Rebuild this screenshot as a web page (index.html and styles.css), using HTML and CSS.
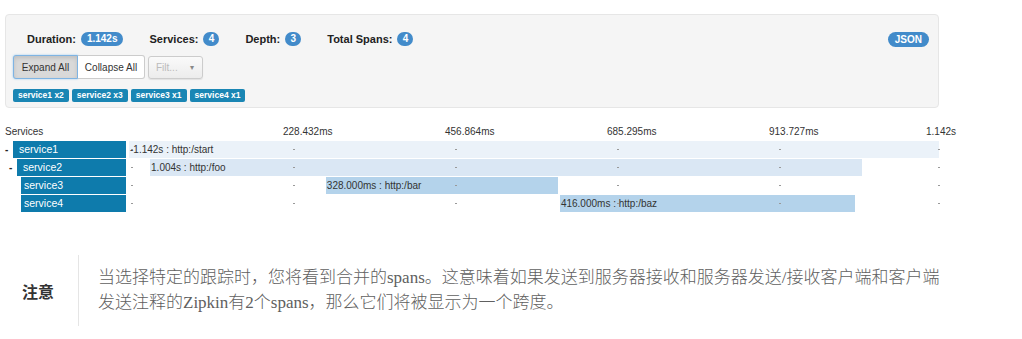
FILE: index.html
```html
<!DOCTYPE html>
<html lang="zh">
<head>
    <meta charset="UTF-8">
    <meta name="viewport" content="width=device-width, initial-scale=1.0">
    <title>Zipkin Trace</title>
    <link rel="stylesheet" href="styles.css">
</head>
<body>

    <!-- Trace summary panel -->
    <div class="trace-panel">
        <div class="summary">
            <span class="stat">Duration: <span class="badge">1.142s</span></span>
            <span class="stat">Services: <span class="badge round">4</span></span>
            <span class="stat">Depth: <span class="badge round">3</span></span>
            <span class="stat">Total Spans: <span class="badge round">4</span></span>
            <span class="badge json">JSON</span>
        </div>

        <div class="controls">
            <div class="btn-group">
                <button class="btn active">Expand All</button>
                <button class="btn">Collapse All</button>
            </div>
            <div class="filter-select">
                <span class="placeholder">Filt...</span>
                <span class="caret">&#9662;</span>
            </div>
        </div>

        <div class="service-tags">
            <span class="tag">service1 x2</span>
            <span class="tag">service2 x3</span>
            <span class="tag">service3 x1</span>
            <span class="tag">service4 x1</span>
        </div>
    </div>

    <!-- Timeline -->
    <div class="timeline">
        <div class="timeline-header">
            <div class="name-col">Services</div>
            <div class="axis">
                <span class="tick-label" style="left: 20%;">228.432ms</span>
                <span class="tick-label" style="left: 40%;">456.864ms</span>
                <span class="tick-label" style="left: 60%;">685.295ms</span>
                <span class="tick-label" style="left: 80%;">913.727ms</span>
                <span class="tick-label last" style="left: 100%;">1.142s</span>
            </div>
        </div>

        <div class="span-row">
            <div class="name-col depth-0"><span class="toggle">-</span><span class="service-name">service1</span></div>
            <div class="axis">
                <div class="span-bar level-1" style="left: 0%; width: 100%;">-1.142s : http:/start</div>
                <i class="dot" style="left: 0%;"></i><i class="dot" style="left: 20%;"></i><i class="dot" style="left: 40%;"></i><i class="dot" style="left: 60%;"></i><i class="dot" style="left: 80%;"></i><i class="dot" style="left: 99.6%;"></i>
            </div>
        </div>

        <div class="span-row">
            <div class="name-col depth-1"><span class="toggle">-</span><span class="service-name">service2</span></div>
            <div class="axis">
                <div class="span-bar level-2" style="left: 2.6%; width: 87.9%;">1.004s : http:/foo</div>
                <i class="dot" style="left: 0%;"></i><i class="dot" style="left: 20%;"></i><i class="dot" style="left: 40%;"></i><i class="dot" style="left: 60%;"></i><i class="dot" style="left: 80%;"></i><i class="dot" style="left: 99.6%;"></i>
            </div>
        </div>

        <div class="span-row">
            <div class="name-col depth-2"><span class="toggle"></span><span class="service-name">service3</span></div>
            <div class="axis">
                <div class="span-bar level-3" style="left: 24.3%; width: 28.7%;">328.000ms : http:/bar</div>
                <i class="dot" style="left: 0%;"></i><i class="dot" style="left: 20%;"></i><i class="dot" style="left: 40%;"></i><i class="dot" style="left: 60%;"></i><i class="dot" style="left: 80%;"></i><i class="dot" style="left: 99.6%;"></i>
            </div>
        </div>

        <div class="span-row">
            <div class="name-col depth-2"><span class="toggle"></span><span class="service-name">service4</span></div>
            <div class="axis">
                <div class="span-bar level-3" style="left: 53.2%; width: 36.4%;">416.000ms : http:/baz</div>
                <i class="dot" style="left: 0%;"></i><i class="dot" style="left: 20%;"></i><i class="dot" style="left: 40%;"></i><i class="dot" style="left: 60%;"></i><i class="dot" style="left: 80%;"></i><i class="dot" style="left: 99.6%;"></i>
            </div>
        </div>
    </div>

    <!-- Note -->
    <div class="note">
        <div class="note-label">注意</div>
        <div class="note-body">
            当选择特定的跟踪时，您将看到合并的spans。这意味着如果发送到服务器接收和服务器发送/接收客户端和客户端发送注释的Zipkin有2个spans，那么它们将被显示为一个跨度。
        </div>
    </div>

</body>
</html>
```

FILE: styles.css
```css
/* General Page Styling */
body {
    font-family: "Liberation Sans", Arial, sans-serif;
    background-color: #fff;
    color: #333;
    margin: 0;
    padding: 14px 0 0 5px;
}

/* Trace Panel */
.trace-panel {
    width: 932px;
    height: 92px;
    background-color: #f5f5f5;
    border: 1px solid #e6e6e6;
    border-radius: 4px;
}

.summary {
    display: flex;
    align-items: center;
    gap: 26px;
    padding: 16px 9px 0 21px;
    height: 16px;
}

.stat {
    font-size: 11px;
    font-weight: bold;
    color: #222;
    display: flex;
    align-items: center;
    gap: 5px;
}

.badge {
    display: inline-block;
    background-color: #428bca;
    color: white;
    font-size: 10px;
    font-weight: bold;
    line-height: 14px;
    height: 14px;
    padding: 0 6px;
    border-radius: 8px;
}

.badge.round {
    width: 16px;
    padding: 0;
    text-align: center;
}

.badge.json {
    margin-left: auto;
    padding: 0 7px;
    height: 15px;
    line-height: 15px;
}

/* Buttons */
.controls {
    display: flex;
    align-items: center;
    gap: 3px;
    padding: 8px 0 0 7px;
}

.btn-group {
    display: flex;
}

.btn {
    font-family: "Liberation Sans", Arial, sans-serif;
    font-size: 10px;
    color: #333;
    height: 24px;
    padding: 0;
    white-space: nowrap;
    background-color: #fff;
    border: 1px solid #ccc;
    margin: 0;
}

.btn:first-child {
    border-radius: 3px 0 0 3px;
}

.btn:last-child {
    border-radius: 0 3px 3px 0;
    border-left: none;
    width: 67px;
}

.btn.active {
    width: 65px;
    background-color: #d9d9d9;
    border-color: #7fb4e3;
    box-shadow: inset 0 2px 4px rgba(0, 0, 0, 0.12), 0 0 2px rgba(102, 175, 233, 0.7);
}

.filter-select {
    width: 55px;
    height: 23px;
    border: 1px solid #ccc;
    border-radius: 3px;
    background: linear-gradient(#fafafa, #ececec);
    display: flex;
    align-items: center;
    justify-content: space-between;
    padding: 0 8px 0 7px;
    box-sizing: border-box;
    box-shadow: 0 1px 1px rgba(0, 0, 0, 0.08);
}

.placeholder {
    font-size: 10px;
    color: #bbb;
}

.caret {
    font-size: 8px;
    color: #888;
}

/* Service tags */
.service-tags {
    display: flex;
    gap: 3px;
    padding: 10px 0 0 7px;
}

.tag {
    background-color: #1a86b4;
    color: white;
    font-size: 8.5px;
    font-weight: bold;
    line-height: 13px;
    height: 13px;
    padding: 0 5px;
    border-radius: 2px;
}

/* Timeline */
.timeline {
    width: 934px;
    margin-top: 16px;
    font-size: 10px;
}

.timeline-header,
.span-row {
    display: grid;
    grid-template-columns: 121px 810px;
    column-gap: 3px;
}

.timeline-header {
    height: 17px;
    line-height: 16px;
}

.span-row {
    height: 17px;
    margin-bottom: 1px;
}

.axis {
    position: relative;
}

.tick-label {
    position: absolute;
    top: 0;
    margin-left: -8px;
    white-space: nowrap;
}

.tick-label.last {
    margin-left: -13px;
}

.name-col {
    display: flex;
    align-items: stretch;
}

.depth-1 {
    padding-left: 4px;
}

.depth-2 {
    padding-left: 8px;
}

.toggle {
    width: 8px;
    flex: none;
    font-weight: bold;
    line-height: 17px;
    color: #222;
}

.service-name {
    flex: 1;
    background-color: #0e7bac;
    color: white;
    font-size: 10.5px;
    line-height: 17px;
    padding-left: 6px;
}

.depth-2 .service-name {
    padding-left: 3px;
}

.span-bar {
    position: absolute;
    top: 0;
    height: 17px;
    line-height: 17px;
    padding-left: 1px;
    white-space: nowrap;
    color: #333;
    box-sizing: border-box;
}

.level-1 {
    background-color: #ebf2f9;
}

.level-2 {
    background-color: #dae7f4;
}

.level-3 {
    background-color: #b4d3eb;
}

.dot {
    position: absolute;
    top: 8px;
    width: 2px;
    height: 1px;
    margin-left: 2px;
    background-color: #999;
}

/* Note */
.note {
    display: flex;
    margin-top: 43px;
}

.note-label {
    width: 73px;
    flex: none;
    display: flex;
    align-items: center;
    padding-left: 17px;
    box-sizing: border-box;
    font-family: "Noto Sans CJK SC", sans-serif;
    font-size: 16px;
    font-weight: bold;
    color: #333;
}

.note-body {
    border-left: 1px solid #e5e5e5;
    padding: 10px 0 11px 19px;
    width: 848px;
    font-family: "Liberation Serif", "Noto Sans CJK SC", serif;
    font-size: 17px;
    font-weight: 300;
    line-height: 25px;
    color: #606060;
}
```
